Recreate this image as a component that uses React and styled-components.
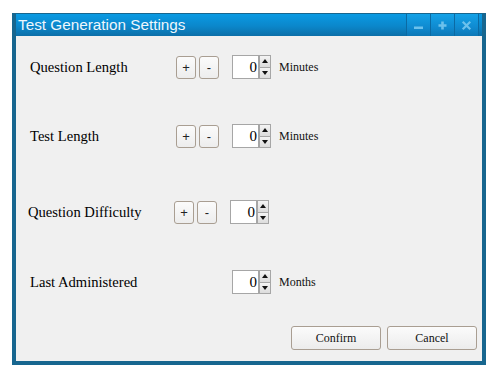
import React from "react";
import styled, { createGlobalStyle } from "styled-components";

const GlobalStyle = createGlobalStyle`
  body {
    margin: 0;
    background: #ffffff;
  }
`;

const Window = styled.div`
  box-sizing: border-box;
  margin: 13px 0 0 12px;
  width: 474px;
  height: 352px;
  display: flex;
  flex-direction: column;
  border: 4px solid #17668f;
  border-top-width: 1px;
  background: #f0f0f0;
`;

const TitleBar = styled.div`
  height: 22px;
  display: flex;
  align-items: stretch;
  justify-content: space-between;
  background: linear-gradient(#0a9ae3, #0b87cb 55%, #0c6fa8);
`;

const Title = styled.div`
  padding-left: 2px;
  font-family: "Liberation Sans", Arial, sans-serif;
  font-size: 15.3px;
  line-height: 22px;
  color: #eef7fd;
`;

const TitleButtons = styled.div`
  display: flex;
  padding-right: 3px;
`;

const TitleButton = styled.div`
  width: 23px;
  display: flex;
  align-items: center;
  justify-content: center;
  border-left: 1px solid #0b6aa3;
  background: linear-gradient(#14a2e7, #0f8ad0 60%, #0d78b6);
  &:last-child {
    border-right: 1px solid #0b6aa3;
  }
`;

const Content = styled.div`
  flex: 1;
  display: flex;
  flex-direction: column;
`;

const Row = styled.div`
  display: flex;
  align-items: center;
  height: 24px;
  margin-top: ${p => p.$top}px;
  padding-left: ${p => p.$indent}px;
`;

const Label = styled.div`
  width: 146px;
  font-family: "Liberation Serif", "Times New Roman", serif;
  font-size: 14.6px;
  color: #000;
`;

const StepGroup = styled.div`
  width: 56px;
  display: flex;
  gap: 3px;
`;

const StepButton = styled.div`
  box-sizing: border-box;
  width: 20px;
  height: 23px;
  display: flex;
  align-items: center;
  justify-content: center;
  border: 1px solid #a99e92;
  border-radius: 3px;
  background: linear-gradient(#fbfbfb, #ededed);
  font-family: "Liberation Sans", Arial, sans-serif;
  font-size: 13px;
  color: #222;
`;

const Spin = styled.div`
  display: flex;
  align-items: stretch;
  height: 24px;
`;

const SpinField = styled.div`
  box-sizing: border-box;
  width: 27px;
  border: 1px solid #a6a6a6;
  background: #fff;
  text-align: right;
  padding-right: 1px;
  font-family: "Liberation Serif", "Times New Roman", serif;
  font-size: 15px;
  line-height: 22px;
  color: #000;
`;

const SpinArrows = styled.div`
  width: 12px;
  display: flex;
  flex-direction: column;
`;

const Arrow = styled.div`
  box-sizing: border-box;
  flex: 1;
  display: flex;
  align-items: center;
  justify-content: center;
  border: 1px solid #a6a6a6;
  border-top-width: ${p => (p.$down ? 0 : 1)}px;
  background: linear-gradient(#f4f4f4, #dcdcdc);
  &::after {
    content: "";
    border-left: 3px solid transparent;
    border-right: 3px solid transparent;
    ${p =>
      p.$down
        ? "border-top: 4px solid #111;"
        : "border-bottom: 4px solid #111;"}
  }
`;

const Unit = styled.div`
  margin-left: 8px;
  font-family: "Liberation Serif", "Times New Roman", serif;
  font-size: 12px;
  color: #111;
`;

const Footer = styled.div`
  margin-top: auto;
  display: flex;
  justify-content: flex-end;
  gap: 6px;
  padding: 0 5px 11px 0;
`;

const DialogButton = styled.div`
  box-sizing: border-box;
  width: 90px;
  height: 24px;
  display: flex;
  align-items: center;
  justify-content: center;
  border: 1px solid #a99e92;
  border-radius: 3px;
  background: linear-gradient(#fbfbfb, #ececec);
  font-family: "Liberation Serif", "Times New Roman", serif;
  font-size: 12px;
  color: #111;
`;

const iconColor = "#6cc1ec";

const Icon = ({ kind }) => (
  <svg width="11" height="11" viewBox="0 0 11 11">
    {kind === "min" && <rect x="1" y="6.5" width="9" height="2.5" fill={iconColor} />}
    {kind === "max" && (
      <path d="M4.2 1.5h2.6v2.7h2.7v2.6H6.8v2.7H4.2V6.8H1.5V4.2h2.7z" fill={iconColor} />
    )}
    {kind === "close" && (
      <g stroke={iconColor} strokeWidth="2.2" strokeLinecap="square">
        <path d="M2.5 2.5l6 6M8.5 2.5l-6 6" />
      </g>
    )}
  </svg>
);

const SpinBox = () => (
  <Spin>
    <SpinField>0</SpinField>
    <SpinArrows>
      <Arrow />
      <Arrow $down />
    </SpinArrows>
  </Spin>
);

const rows = [
  { label: "Question Length", top: 19, indent: 14, steps: true, unit: "Minutes" },
  { label: "Test Length", top: 45, indent: 14, steps: true, unit: "Minutes" },
  { label: "Question Difficulty", top: 52, indent: 12, steps: true },
  { label: "Last Administered", top: 46, indent: 14, steps: false, unit: "Months" },
];

export default function App() {
  return (
    <>
      <GlobalStyle />
      <Window>
        <TitleBar>
          <Title>Test Generation Settings</Title>
          <TitleButtons>
            <TitleButton><Icon kind="min" /></TitleButton>
            <TitleButton><Icon kind="max" /></TitleButton>
            <TitleButton><Icon kind="close" /></TitleButton>
          </TitleButtons>
        </TitleBar>
        <Content>
          {rows.map(row => (
            <Row key={row.label} $top={row.top} $indent={row.indent}>
              <Label>{row.label}</Label>
              <StepGroup>
                {row.steps && (
                  <>
                    <StepButton>+</StepButton>
                    <StepButton>-</StepButton>
                  </>
                )}
              </StepGroup>
              <SpinBox />
              {row.unit && <Unit>{row.unit}</Unit>}
            </Row>
          ))}
          <Footer>
            <DialogButton>Confirm</DialogButton>
            <DialogButton>Cancel</DialogButton>
          </Footer>
        </Content>
      </Window>
    </>
  );
}
